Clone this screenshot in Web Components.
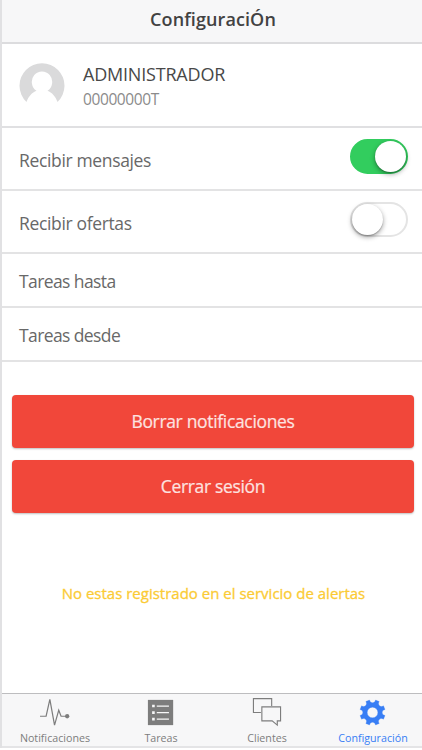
<!DOCTYPE html>
<html lang="es">
<head>
<meta charset="utf-8">
<title>Configuración</title>
<style>
    html, body {
        margin: 0;
        height: 100%;
        background: #ffffff;
    }
    body {
        overflow: hidden;
        font-family: "Open Sans", "Noto Sans", sans-serif;
    }
</style>
</head>
<body>
<settings-page></settings-page>

<script>
class PageHeader extends HTMLElement {
    constructor() {
        super();
        this.attachShadow({mode: "open"}).innerHTML = `
            <style>
                :host{
                    box-sizing: border-box;
                    display: flex;
                    align-items: center;
                    justify-content: center;
                    height: 44px;
                    padding: 0 0 4px 2px;
                    background: #f7f7f8;
                    border-bottom: 2px solid #dcdcde;
                    font-size: 18px;
                    font-weight: 600;
                    letter-spacing: 0.1px;
                    color: #424242;
                }
            </style>
            <slot></slot>
        `;
    }
}

class UserCard extends HTMLElement {
    constructor() {
        super();
        this.attachShadow({mode: "open"}).innerHTML = `
            <style>
                :host{
                    box-sizing: border-box;
                    display: flex;
                    align-items: flex-start;
                    gap: 18px;
                    height: 84px;
                    padding: 18px 18px 0 17px;
                    border-bottom: 2px solid #e0e0e2;
                }
                svg{
                    display: block;
                    width: 46px;
                    height: 46px;
                }
                .name{
                    height: 25px;
                    line-height: 25px;
                    font-size: 18px;
                    letter-spacing: -0.2px;
                    color: #484848;
                }
                .code{
                    line-height: 24px;
                    font-size: 15.5px;
                    letter-spacing: -0.4px;
                    color: #8b8b8b;
                }
            </style>
            <svg viewBox="0 0 46 46">
                <path fill="#dadadb" d="M7.5 40A22.5 22.5 0 1 1 38.5 40C36.5 34.5 33 30.5 28.5 28.8A10.2 10.5 0 1 0 17.5 28.8C13 30.5 9.5 34.5 7.5 40Z"/>
            </svg>
            <div>
                <div class="name"><slot name="name"></slot></div>
                <div class="code"><slot name="code"></slot></div>
            </div>
        `;
    }
}

class SettingRow extends HTMLElement {
    constructor() {
        super();
        this.attachShadow({mode: "open"}).innerHTML = `
            <style>
                :host{
                    box-sizing: border-box;
                    display: flex;
                    align-items: center;
                    justify-content: space-between;
                    height: var(--row-height, 54px);
                    padding: 2px 14px 0 17px;
                    border-bottom: 2px solid #e3e3e4;
                    font-size: 17.5px;
                    letter-spacing: var(--row-spacing, -0.6px);
                    color: #686868;
                }
            </style>
            <span><slot></slot></span>
            <slot name="end"></slot>
        `;
    }
}

class ToggleSwitch extends HTMLElement {
    constructor() {
        super();
        this.attachShadow({mode: "open"}).innerHTML = `
            <style>
                :host{
                    box-sizing: border-box;
                    display: flex;
                    width: 58px;
                    height: 35px;
                    margin-bottom: 6px;
                    border: 2px solid #e4e4e4;
                    border-radius: 18px;
                    background: #ffffff;
                }
                :host([checked]){
                    justify-content: flex-end;
                    background: #32cd5e;
                    border-color: #32cd5e;
                }
                .knob{
                    width: 31px;
                    height: 31px;
                    border-radius: 50%;
                    background: #ffffff;
                    box-shadow: 0 2px 5px rgba(0, 0, 0, 0.38), 0 1px 1px rgba(0, 0, 0, 0.2);
                }
            </style>
            <div class="knob"></div>
        `;
    }
}

class DangerButton extends HTMLElement {
    constructor() {
        super();
        this.attachShadow({mode: "open"}).innerHTML = `
            <style>
                :host{
                    display: block;
                }
                button{
                    display: block;
                    box-sizing: border-box;
                    width: 100%;
                    height: 53px;
                    padding: 0 0 1px;
                    border: 0;
                    border-radius: 4px;
                    background: #f1473a;
                    box-shadow: 0 1px 2px rgba(0, 0, 0, 0.25);
                    font-family: inherit;
                    font-size: 17.5px;
                    letter-spacing: -0.33px;
                    color: #fde3e0;
                    -webkit-text-stroke: 0.2px #fde3e0;
                }
            </style>
            <button type="button"><slot></slot></button>
        `;
    }
}

const tabIcons = {
    pulse: `
        <path d="M0 19.5H6.5L10.5 1.5L15.5 29L20 13L22.500 19.5H29" fill="none" stroke="currentColor" stroke-width="1.3"/>
        <circle cx="29" cy="19.5" r="2.3" fill="currentColor"/>`,
    list: `
        <path d="M2 2H29V29H2Z" fill="currentColor"/>
        <path d="M6.500 7.200h2.800v2.800h-2.800zM6.500 14.200h2.800v2.800h-2.800zM6.500 21.200h2.800v2.800h-2.800zM11.500 8h13v1.300h-13zM11.500 15h13v1.300h-13zM11.500 22h13v1.300h-13z" fill="#f7f7f8"/>`,
    chat: `
        <path d="M9.500 15.500H1.500V0.700H21V8.500" fill="none" stroke="currentColor" stroke-width="1.200"/>
        <path d="M10.500 9.500H30.500V24.500H27V29L21.500 24.500H10.500Z" fill="none" stroke="currentColor" stroke-width="1.200"/>`,
    gear: `
        <g transform="translate(15.5 15.5) scale(0.98)">
            <path fill="currentColor" fill-rule="evenodd" stroke="currentColor" stroke-width="0.3" stroke-linejoin="round" d="M3.27-13.61L7.31-11.94C4.95-8.63 8.63-4.95 11.94-7.31L13.61-3.27C9.6-2.6 9.6 2.6 13.61 3.27L11.94 7.31C8.63 4.95 4.95 8.63 7.31 11.94L3.27 13.61C2.6 9.6-2.6 9.6-3.27 13.61L-7.31 11.94C-4.95 8.63-8.63 4.95-11.94 7.31L-13.61 3.27C-9.6 2.6-9.6-2.6-13.61-3.27L-11.94-7.31C-8.63-4.95-4.95-8.63-7.31-11.94L-3.27-13.61C-2.6-9.6 2.6-9.6 3.27-13.61ZM0-5.8A5.8 5.8 0 1 0 0 5.8A5.8 5.8 0 1 0 0-5.8Z"/>
        </g>`
};

class TabItem extends HTMLElement {
    constructor() {
        super();
        this.attachShadow({mode: "open"});
    }

    connectedCallback() {
        this.shadowRoot.innerHTML = `
            <style>
                :host{
                    display: flex;
                    flex: 1;
                    flex-direction: column;
                    align-items: center;
                    color: #7d7d7d;
                    font-size: 10.7px;
                    line-height: 16px;
                    white-space: nowrap;
                }
                :host([active]){
                    color: #387ef5;
                }
                svg{
                    display: block;
                    width: 32px;
                    height: 31px;
                    margin: 4px 0 3px;
                }
            </style>
            <svg viewBox="0 0 32 31">${tabIcons[this.getAttribute("icon")]}</svg>
            <span><slot></slot></span>
        `;
    }
}

class TabBar extends HTMLElement {
    constructor() {
        super();
        this.attachShadow({mode: "open"}).innerHTML = `
            <style>
                :host{
                    box-sizing: border-box;
                    display: flex;
                    height: 55px;
                    border-top: 1px solid #bdbdbf;
                    border-bottom: 2px solid #e4e4e6;
                    background: #f7f7f8;
                }
                ::slotted(tab-item){
                    flex: 0 0 106px;
                }
            </style>
            <slot></slot>
        `;
    }
}

class SettingsPage extends HTMLElement {
    constructor() {
        super();
        this.attachShadow({mode: "open"}).innerHTML = `
            <style>
                :host{
                    box-sizing: border-box;
                    display: flex;
                    flex-direction: column;
                    height: 748px;
                    border-left: 2px solid #e1e1e3;
                }
                main{
                    flex: 1;
                }
                .toggle-row{
                    --row-height: 63px;
                    --row-spacing: -0.35px;
                }
                .actions{
                    display: grid;
                    gap: 12px;
                    padding: 33px 8px 0 10px;
                }
                .notice{
                    margin: 69px 0 0;
                    padding-left: 3px;
                    text-align: center;
                    font-size: 15px;
                    line-height: 22px;
                    color: #fbcb34;
                    -webkit-text-stroke: 0.3px #fbcb34;
                }
            </style>
            <page-header>ConfiguraciÓn</page-header>
            <main>
                <user-card>
                    <span slot="name">ADMINISTRADOR</span>
                    <span slot="code">00000000T</span>
                </user-card>
                <setting-row class="toggle-row">Recibir mensajes<toggle-switch slot="end" checked></toggle-switch></setting-row>
                <setting-row class="toggle-row">Recibir ofertas<toggle-switch slot="end"></toggle-switch></setting-row>
                <setting-row>Tareas hasta</setting-row>
                <setting-row>Tareas desde</setting-row>
                <div class="actions">
                    <danger-button>Borrar notificaciones</danger-button>
                    <danger-button>Cerrar sesión</danger-button>
                </div>
                <p class="notice">No estas registrado en el servicio de alertas</p>
            </main>
            <tab-bar>
                <tab-item icon="pulse">Notificaciones</tab-item>
                <tab-item icon="list">Tareas</tab-item>
                <tab-item icon="chat">Clientes</tab-item>
                <tab-item icon="gear" active>Configuración</tab-item>
            </tab-bar>
        `;
    }
}

customElements.define("page-header", PageHeader);
customElements.define("user-card", UserCard);
customElements.define("setting-row", SettingRow);
customElements.define("toggle-switch", ToggleSwitch);
customElements.define("danger-button", DangerButton);
customElements.define("tab-item", TabItem);
customElements.define("tab-bar", TabBar);
customElements.define("settings-page", SettingsPage);
</script>
</body>
</html>
